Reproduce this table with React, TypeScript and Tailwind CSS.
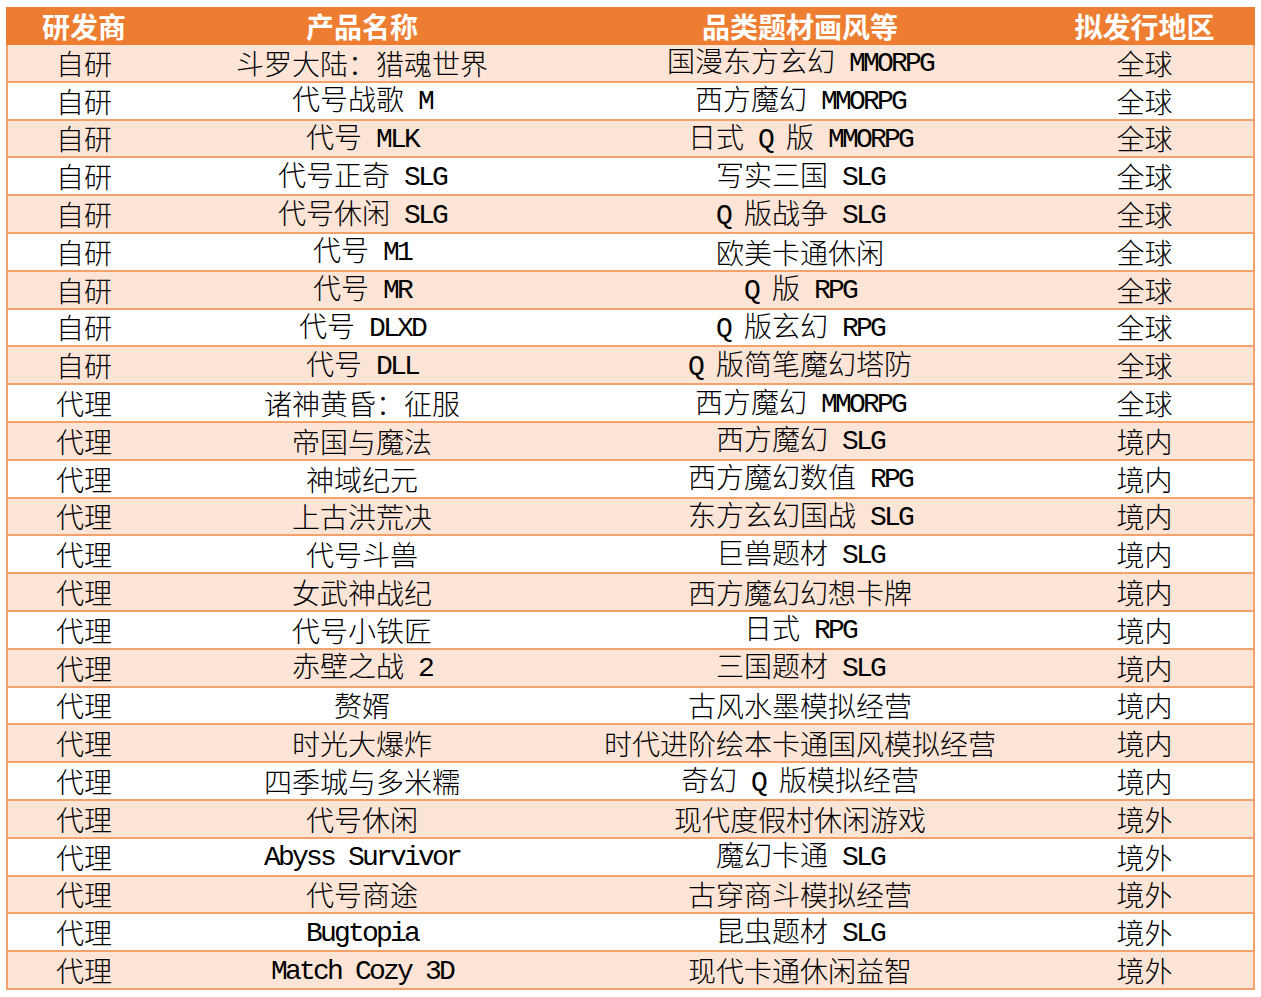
const rows = [
  ['自研', '斗罗大陆：猎魂世界', '国漫东方玄幻 MMORPG', '全球'],
  ['自研', '代号战歌 M', '西方魔幻 MMORPG', '全球'],
  ['自研', '代号 MLK', '日式 Q 版 MMORPG', '全球'],
  ['自研', '代号正奇 SLG', '写实三国 SLG', '全球'],
  ['自研', '代号休闲 SLG', 'Q 版战争 SLG', '全球'],
  ['自研', '代号 M1', '欧美卡通休闲', '全球'],
  ['自研', '代号 MR', 'Q 版 RPG', '全球'],
  ['自研', '代号 DLXD', 'Q 版玄幻 RPG', '全球'],
  ['自研', '代号 DLL', 'Q 版简笔魔幻塔防', '全球'],
  ['代理', '诸神黄昏：征服', '西方魔幻 MMORPG', '全球'],
  ['代理', '帝国与魔法', '西方魔幻 SLG', '境内'],
  ['代理', '神域纪元', '西方魔幻数值 RPG', '境内'],
  ['代理', '上古洪荒决', '东方玄幻国战 SLG', '境内'],
  ['代理', '代号斗兽', '巨兽题材 SLG', '境内'],
  ['代理', '女武神战纪', '西方魔幻幻想卡牌', '境内'],
  ['代理', '代号小铁匠', '日式 RPG', '境内'],
  ['代理', '赤壁之战 2', '三国题材 SLG', '境内'],
  ['代理', '赘婿', '古风水墨模拟经营', '境内'],
  ['代理', '时光大爆炸', '时代进阶绘本卡通国风模拟经营', '境内'],
  ['代理', '四季城与多米糯', '奇幻 Q 版模拟经营', '境内'],
  ['代理', '代号休闲', '现代度假村休闲游戏', '境外'],
  ['代理', 'Abyss Survivor', '魔幻卡通 SLG', '境外'],
  ['代理', '代号商途', '古穿商斗模拟经营', '境外'],
  ['代理', 'Bugtopia', '昆虫题材 SLG', '境外'],
  ['代理', 'Match Cozy 3D', '现代卡通休闲益智', '境外'],
];

const headers = ['研发商', '产品名称', '品类题材画风等', '拟发行地区'];

// latin runs get a narrow monospace, like the half-width glyphs in the original
function Mixed({ text }: { text: string }) {
  const parts = text.split(/([ -~]+)/).filter(Boolean);
  return (
    <span className="leading-none">
      {parts.map((p, i) =>
        /[ -~]/.test(p) ? (
          <span
            key={i}
            className="relative -top-[1px] font-['Liberation_Mono',monospace] font-normal tracking-[-2.8px] whitespace-pre"
          >
            {p}
          </span>
        ) : (
          <span key={i}>{p}</span>
        )
      )}
    </span>
  );
}

export default function App() {
  return (
    <div className="bg-white pt-[7px] pl-[6px] min-h-[997px] font-['Noto_Sans_CJK_SC',sans-serif]">
      <div className="w-[1249px]">
        <div className="grid grid-cols-[152px_404px_472px_1fr] h-[38px] bg-[#ED7D31] border-x-2 border-[#ED7D31] text-white font-bold text-[28px] leading-none">
          {headers.map((h) => (
            <div key={h} className="flex items-center justify-center">
              {h}
            </div>
          ))}
        </div>
        {rows.map((r, i) => (
          <div
            key={i}
            className={`grid grid-cols-[152px_404px_472px_1fr] h-[37.8px] border-x-2 border-b-2 border-[#F4A26B] text-[28px] font-light leading-none text-black ${
              i % 2 === 0 ? 'bg-[#FCE4D6]' : 'bg-white'
            }`}
          >
            {r.map((c, j) => (
              <div key={j} className="flex items-center justify-center whitespace-nowrap">
                <Mixed text={c} />
              </div>
            ))}
          </div>
        ))}
      </div>
    </div>
  );
}
